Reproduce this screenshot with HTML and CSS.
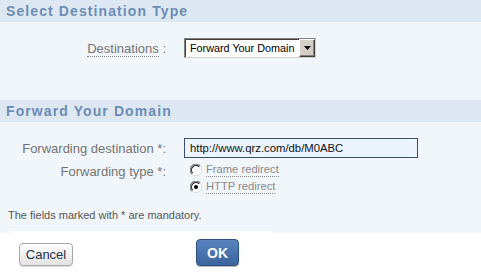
FILE: index.html
```html
<!DOCTYPE html>
<html>
<head>
<meta charset="utf-8">
<link rel="stylesheet" href="styles.css">
</head>
<body>
<div class="page">
  <div class="section-head">Select Destination Type</div>
  <div class="section-body body-one">
    <div class="row">
      <div class="label"><span class="dotted">Destinations</span> :</div>
      <div class="control">
        <div class="fake-select">
          <span class="select-text">Forward Your Domain</span>
          <span class="select-btn"><svg width="7" height="4" viewBox="0 0 7 4"><path d="M0 0H7L3.5 4Z" fill="#000"/></svg></span>
        </div>
      </div>
    </div>
  </div>
  <div class="section-head">Forward Your Domain</div>
  <div class="section-body body-two">
    <div class="row">
      <div class="label">Forwarding destination *:</div>
      <div class="control"><div class="text-input">http://www.qrz.com/db/M0ABC</div></div>
    </div>
    <div class="row row-radio">
      <div class="label">Forwarding type *:</div>
      <div class="control radios">
        <div class="radio-line">
          <svg class="radio" width="12" height="12" viewBox="0 0 12 12"><circle cx="6" cy="6" r="5.5" fill="#fff"/><path d="M1.9 10.1A5.5 5.5 0 0 1 10.1 1.9" stroke="#808080" stroke-width="1.2" fill="none"/><path d="M2.8 9.2A4.4 4.4 0 0 1 9.2 2.8" stroke="#222" stroke-width="1.1" fill="none"/><path d="M10.1 1.9A5.5 5.5 0 0 1 1.9 10.1" stroke="#dcdcdc" stroke-width="1" fill="none"/></svg>
          <span class="dotted radio-text">Frame redirect</span>
        </div>
        <div class="radio-line">
          <svg class="radio" width="12" height="12" viewBox="0 0 12 12"><circle cx="6" cy="6" r="5.5" fill="#fff"/><path d="M1.9 10.1A5.5 5.5 0 0 1 10.1 1.9" stroke="#808080" stroke-width="1.2" fill="none"/><path d="M2.8 9.2A4.4 4.4 0 0 1 9.2 2.8" stroke="#222" stroke-width="1.1" fill="none"/><path d="M10.1 1.9A5.5 5.5 0 0 1 1.9 10.1" stroke="#dcdcdc" stroke-width="1" fill="none"/><circle cx="6" cy="6" r="2" fill="#000"/></svg>
          <span class="dotted radio-text">HTTP redirect</span>
        </div>
      </div>
    </div>
    <div class="note">The fields marked with * are mandatory.</div>
  </div>
  <div class="footer">
    <button class="btn btn-cancel">Cancel</button>
    <button class="btn btn-ok">OK</button>
  </div>
</div>
</body>
</html>
```
FILE: styles.css
```css
html, body {
  margin: 0;
  padding: 0;
  background: #ffffff;
}
.page {
  width: 481px;
  font-family: "Liberation Sans", Arial, sans-serif;
}
.section-head {
  height: 22px;
  line-height: 22px;
  background: #dde8f2;
  color: #6d8cb6;
  font-weight: bold;
  font-size: 14px;
  letter-spacing: 1.1px;
  padding-left: 6px;
}
.section-body {
  background: #f1f6fb;
  box-sizing: border-box;
}
.body-one {
  height: 78px;
  padding-top: 16px;
}
.body-two {
  height: 111px;
  padding-top: 16px;
}
.row {
  display: flex;
  align-items: center;
}
.label {
  width: 166px;
  text-align: right;
  font-size: 13px;
  color: #737373;
  flex: none;
}
.dotted {
  border-bottom: 1px dotted #8a8a8a;
}
.control {
  margin-left: 18px;
}
.fake-select {
  width: 132px;
  height: 20px;
  box-sizing: border-box;
  border-top: 1px solid #808080;
  border-left: 1px solid #808080;
  border-right: 1px solid #d4d0c8;
  border-bottom: 1px solid #d4d0c8;
  display: flex;
  background: #fff;
}
.select-text {
  flex: 1;
  min-width: 0;
  white-space: nowrap;
  font-size: 10.8px;
  color: #000;
  line-height: 17px;
  padding-left: 4px;
  border-top: 1px solid #404040;
  border-left: 1px solid #404040;
}
.select-btn {
  width: 16px;
  flex: none;
  box-sizing: border-box;
  background: #d4d0c8;
  border-top: 1px solid #fff;
  border-left: 1px solid #fff;
  border-right: 1px solid #404040;
  border-bottom: 1px solid #404040;
  box-shadow: inset -1px -1px 0 #808080;
  display: flex;
  align-items: center;
  justify-content: center;
}
.text-input {
  width: 234px;
  height: 20px;
  box-sizing: border-box;
  border: 1px solid #3e4e6e;
  background: #ebf4fd;
  font-size: 11.3px;
  color: #111;
  line-height: 18px;
  padding-left: 5px;
  white-space: nowrap;
}
.row-radio {
  align-items: flex-start;
  margin-top: 5px;
}
.row-radio .label {
  padding-top: 1px;
}
.radios {
  margin-left: 24px;
  display: flex;
  flex-direction: column;
  gap: 3px;
}
.radio-line {
  display: flex;
  align-items: center;
  gap: 4px;
  height: 14px;
}
.radio {
  flex: none;
}
.radio-text {
  font-size: 11.2px;
  color: #8a8a8a;
  line-height: 13px;
}
.note {
  margin-top: 15px;
  padding-left: 8px;
  font-size: 11px;
  color: #555;
}
.footer {
  width: 262px;
  margin-left: 10px;
  margin-top: -2px;
  background: #fff;
  display: flex;
  align-items: center;
  padding-top: 5px;
  height: 38px;
  box-sizing: border-box;
}
.btn {
  font-family: "Liberation Sans", Arial, sans-serif;
  border-radius: 4px;
  cursor: pointer;
  padding: 0;
}
.btn-cancel {
  margin-left: 9px;
  width: 54px;
  height: 23px;
  font-size: 13px;
  color: #23324d;
  border: 1px solid #a9a9a9;
  background: linear-gradient(#ffffff, #e3e3e3);
  box-shadow: 0 1px 1px rgba(0,0,0,0.15);
  margin-top: 4px;
}
.btn-ok {
  margin-left: 123px;
  width: 43px;
  height: 27px;
  font-size: 14px;
  font-weight: bold;
  color: #fff;
  border: 1px solid #2c4f84;
  background: linear-gradient(#5a84bd, #3b649f);
  box-shadow: 0 1px 1px rgba(0,0,0,0.3);
}
```
